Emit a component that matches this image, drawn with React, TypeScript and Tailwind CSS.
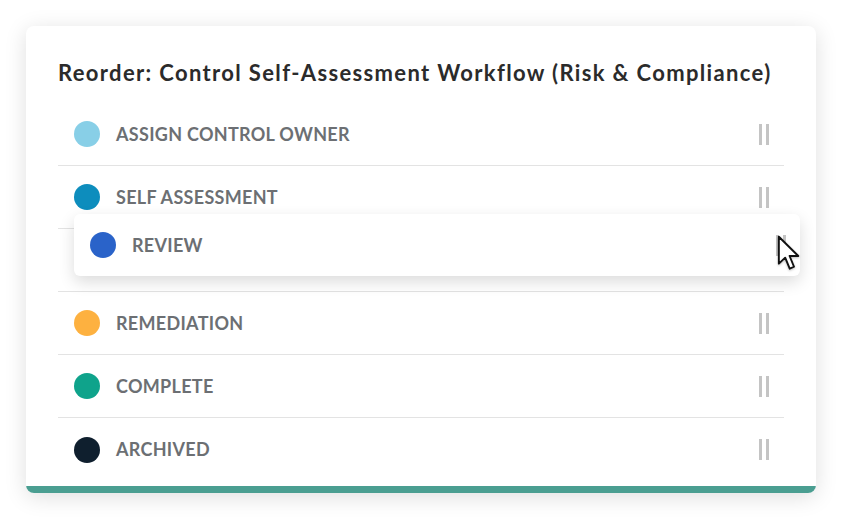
const steps = [
  { label: 'ASSIGN CONTROL OWNER', color: '#88cfe7' },
  { label: 'SELF ASSESSMENT', color: '#0d8dbd' },
  { label: null, color: '' },
  { label: 'REMEDIATION', color: '#fdb140' },
  { label: 'COMPLETE', color: '#0fa38b' },
  { label: 'ARCHIVED', color: '#0f1f2e' },
];

function Handle() {
  return (
    <div className="flex h-[21px] gap-[4px]">
      <span className="w-[3px] bg-[#c4c4c4]" />
      <span className="w-[3px] bg-[#c4c4c4]" />
    </div>
  );
}

function Cursor() {
  return (
    <svg width="24" height="37" viewBox="0 0 20 31" className="drop-shadow-[0_1px_1px_rgba(0,0,0,0.25)]">
      <path
        d="M1.5 1.5 L1.5 24 L6.8 19 L10.6 28.2 L14.2 26.6 L10.5 17.6 L17.8 17.6 Z"
        fill="#fff"
        stroke="#111"
        strokeWidth="1.6"
        strokeLinejoin="round"
      />
    </svg>
  );
}

export default function App() {
  return (
    <div className="flex h-[520px] w-[842px] items-start bg-white pl-[26px] pt-[26px] font-['Lato',sans-serif]">
      <div className="relative w-[790px] overflow-hidden rounded-[8px] bg-white shadow-[0_4px_22px_rgba(0,0,0,0.13)]">
        <div className="px-[32px] pt-[30px] pb-[5px]">
          <h1 className="mb-[13px] whitespace-nowrap text-[22px] leading-[34px] font-bold tracking-[1.35px] text-[#2b2b2b]">
            Reorder: Control Self-Assessment Workflow (Risk &amp; Compliance)
          </h1>
          <div className="w-[726px]">
            {steps.map((s, i) => (
              <div
                key={i}
                className={`flex h-[63px] items-center pl-[16px] pr-[15px] ${i < steps.length - 1 ? 'border-b border-[#e3e3e3]' : ''}`}
              >
                {s.label && (
                  <>
                    <span className="h-[26px] w-[26px] rounded-full" style={{ backgroundColor: s.color }} />
                    <span className="ml-[16px] flex-1 text-[18px] font-bold tracking-[0.3px] text-[#6c6f73]">{s.label}</span>
                    <Handle />
                  </>
                )}
              </div>
            ))}
          </div>
        </div>
        <div className="h-[7px] bg-[#4a9e91]" />

        <div className="absolute top-[188px] left-[48px] flex h-[62px] w-[726px] items-center rounded-[6px] bg-white pl-[16px] pr-[14px] shadow-[0_6px_16px_rgba(0,0,0,0.14)]">
          <span className="h-[26px] w-[26px] rounded-full bg-[#2a63c9]" />
          <span className="ml-[16px] flex-1 text-[18px] font-bold tracking-[0.3px] text-[#6c6f73]">REVIEW</span>
          <Handle />
        </div>
        <div className="absolute top-[209px] left-[751px]">
          <Cursor />
        </div>
      </div>
    </div>
  );
}
